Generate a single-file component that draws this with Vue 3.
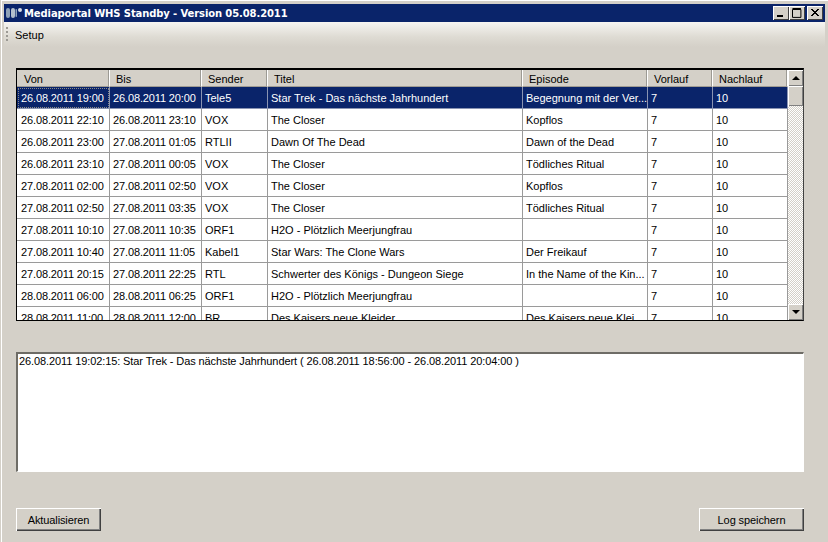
<script setup>
const columns = [
  { label: 'Von', w: 93 },
  { label: 'Bis', w: 92 },
  { label: 'Sender', w: 66 },
  { label: 'Titel', w: 255 },
  { label: 'Episode', w: 125 },
  { label: 'Vorlauf', w: 65 },
  { label: 'Nachlauf', w: 75 }
]
const rows = [
  ['26.08.2011 19:00', '26.08.2011 20:00', 'Tele5', 'Star Trek - Das nächste Jahrhundert', 'Begegnung mit der Ver...', '7', '10'],
  ['26.08.2011 22:10', '26.08.2011 23:10', 'VOX', 'The Closer', 'Kopflos', '7', '10'],
  ['26.08.2011 23:00', '27.08.2011 01:05', 'RTLII', 'Dawn Of The Dead', 'Dawn of the Dead', '7', '10'],
  ['26.08.2011 23:10', '27.08.2011 00:05', 'VOX', 'The Closer', 'Tödliches Ritual', '7', '10'],
  ['27.08.2011 02:00', '27.08.2011 02:50', 'VOX', 'The Closer', 'Kopflos', '7', '10'],
  ['27.08.2011 02:50', '27.08.2011 03:35', 'VOX', 'The Closer', 'Tödliches Ritual', '7', '10'],
  ['27.08.2011 10:10', '27.08.2011 10:35', 'ORF1', 'H2O - Plötzlich Meerjungfrau', '', '7', '10'],
  ['27.08.2011 10:40', '27.08.2011 11:05', 'Kabel1', 'Star Wars: The Clone Wars', 'Der Freikauf', '7', '10'],
  ['27.08.2011 20:15', '27.08.2011 22:25', 'RTL', 'Schwerter des Königs - Dungeon Siege', 'In the Name of the Kin...', '7', '10'],
  ['28.08.2011 06:00', '28.08.2011 06:25', 'ORF1', 'H2O - Plötzlich Meerjungfrau', '', '7', '10'],
  ['28.08.2011 11:00', '28.08.2011 12:00', 'BR', 'Des Kaisers neue Kleider', 'Des Kaisers neue Klei...', '7', '10']
]
</script>

<template>
  <div class="window">
    <header class="titlebar">
      <svg class="appicon" width="18" height="12" viewBox="0 0 18 12">
        <rect x="0" y="1" width="4" height="10" rx="2" fill="#8fa2b8" />
        <rect x="5" y="1" width="4" height="10" rx="2" fill="#b4c0cc" />
        <rect x="9.5" y="2" width="1.5" height="8" rx="0.7" fill="#8fa2b8" />
        <circle cx="14" cy="3" r="2" fill="#d8dee6" />
      </svg>
      <span class="title">Mediaportal WHS Standby - Version 05.08.2011</span>
      <div class="controls">
        <button class="ctl">
          <svg width="10" height="10" viewBox="0 0 10 10"><rect x="1" y="7" width="6" height="2" fill="#000" /></svg>
        </button>
        <button class="ctl">
          <svg width="10" height="10" viewBox="0 0 10 10"><path d="M0.5 1.5h8.4v7.9h-8.4zM0.5 0.5h8.4" fill="none" stroke="#000" /></svg>
        </button>
        <button class="ctl close">
          <svg width="10" height="10" viewBox="0 0 10 10"><path d="M1 1l7 7M2 1l7 7M8 1l-7 7M9 1l-7 7" stroke="#000" /></svg>
        </button>
      </div>
    </header>

    <nav class="menubar">
      <span class="grip"></span>
      <span class="menuitem">Setup</span>
    </nav>

    <main class="content">
      <section class="grid">
        <div class="gridbody">
          <div class="headrow">
            <div v-for="c in columns" :key="c.label" class="headcell" :style="{ width: c.w + 'px' }">{{ c.label }}</div>
          </div>
          <div class="rows">
            <div v-for="(r, i) in rows" :key="i" class="row" :class="{ selected: i === 0 }">
              <div
                v-for="(v, j) in r"
                :key="j"
                class="cell"
                :class="{ focus: i === 0 && j === 0, date: j < 2 }"
                :style="{ width: columns[j].w + 'px' }"
              >{{ v }}</div>
            </div>
          </div>
        </div>
        <div class="scrollbar">
          <button class="sbtn"><span class="arrow up"></span></button>
          <div class="thumb"></div>
          <div class="track"></div>
          <button class="sbtn"><span class="arrow down"></span></button>
        </div>
      </section>

      <div class="logbox">26.08.2011 19:02:15: Star Trek - Das nächste Jahrhundert ( 26.08.2011 18:56:00 - 26.08.2011 20:04:00 )</div>

      <footer class="actions">
        <button class="btn refresh">Aktualisieren</button>
        <button class="btn save">Log speichern</button>
      </footer>
    </main>
  </div>
</template>

<style>
html, body { margin: 0; background: #d4d0c8; }
</style>

<style scoped>
.window {
  width: 828px;
  height: 542px;
  box-sizing: border-box;
  overflow: hidden;
  background: #d4d0c8;
  border-left: 1px solid #d4d0c8;
  box-shadow: inset 1px 1px 0 #fff;
  padding: 4px 3px 0 3px;
  font-family: "Liberation Sans", Arial, sans-serif;
  font-size: 11px;
  color: #000;
  display: flex;
  flex-direction: column;
}
.titlebar {
  height: 18px;
  flex: none;
  background: #0a246a;
  display: flex;
  align-items: center;
  padding-left: 2px;
  color: #fff;
}
.appicon { flex: none; }
.title {
  font-family: "DejaVu Sans", Verdana, sans-serif;
  font-weight: bold;
  font-size: 10px;
  letter-spacing: -0.11px;
  white-space: nowrap;
}
.controls { margin-left: auto; display: flex; margin-right: 2px; }
.ctl {
  width: 16px;
  height: 14px;
  padding: 0;
  border: none;
  background: #d4d0c8;
  box-shadow: inset 1px 1px 0 #fff, inset -1px -1px 0 #404040;
  display: flex;
  align-items: center;
  justify-content: center;
}
.close { margin-left: 2px; }
.menubar {
  height: 25px;
  flex: none;
  display: flex;
  align-items: center;
  background: linear-gradient(#f6f5f2, #dedbd3 60%, #d4d0c8);
  padding-left: 2px;
}
.grip {
  width: 2px;
  height: 16px;
  background: repeating-linear-gradient(#9c9a94 0 2px, transparent 2px 4px);
}
.menuitem { margin-left: 7px; }
.content {
  flex: 1;
  display: flex;
  flex-direction: column;
  padding: 21px 21px 0 12px;
  min-height: 0;
}
.grid {
  height: 253px;
  flex: none;
  box-sizing: border-box;
  display: flex;
  border: 1px solid #000;
  border-top-width: 2px;
  border-right-color: #404040;
  background: #fff;
  overflow: hidden;
}
.gridbody { width: 771px; flex: none; overflow: hidden; }
.headrow { display: flex; height: 17px; background: #d4d0c8; }
.headcell {
  flex: none;
  box-sizing: border-box;
  padding: 2px 0 0 6px;
  line-height: 14px;
  border-right: 1px solid #fff;
  box-shadow: inset -1px 0 0 #9c9a94;
  border-bottom: 1px solid #a09c94;
  white-space: nowrap;
}
.headcell:first-child { padding-left: 7px; }
.row { display: flex; height: 22px; }
.cell {
  flex: none;
  box-sizing: border-box;
  height: 22px;
  line-height: 22px;
  padding-left: 3px;
  border-right: 1px solid #9a9a9a;
  border-bottom: 1px solid #9a9a9a;
  white-space: nowrap;
  overflow: hidden;
}
.date { letter-spacing: -0.13px; }
.row .cell:first-child { padding-left: 4px; }
.selected { background: #0a246a; color: #fff; }
.selected .cell { border-color: #8a94b2; }
.focus { outline: 1px dotted #8a8a8a; outline-offset: -2px; }
.scrollbar {
  flex: 1;
  display: flex;
  flex-direction: column;
  background: repeating-conic-gradient(#d4d0c8 0 25%, #fff 0 50%) 0 0 / 2px 2px;
}
.sbtn {
  height: 16px;
  flex: none;
  padding: 0;
  border: none;
  background: #d4d0c8;
  box-shadow: inset 1px 1px 0 #fff, inset -1px -1px 0 #808080;
  display: flex;
  align-items: center;
  justify-content: center;
}
.arrow { width: 0; height: 0; border-left: 4px solid transparent; border-right: 4px solid transparent; }
.arrow.up { border-bottom: 4px solid #000; }
.arrow.down { border-top: 4px solid #000; }
.thumb {
  height: 20px;
  flex: none;
  background: #d4d0c8;
  box-shadow: inset 1px 1px 0 #fff, inset -1px -1px 0 #808080;
}
.track { flex: 1; }
.logbox {
  margin-top: 31px;
  height: 120px;
  flex: none;
  box-sizing: border-box;
  background: #fff;
  border: 1px solid #fff;
  border-top: 2px solid #6e6c66;
  border-left: 2px solid #6e6c66;
  padding: 0 0 0 1px;
  line-height: 14px;
  letter-spacing: -0.1px;
  white-space: nowrap;
}
.actions {
  margin-top: 36px;
  display: flex;
  justify-content: space-between;
}
.btn {
  height: 23px;
  padding: 0;
  border: none;
  background: #d4d0c8;
  box-shadow: inset 1px 1px 0 #fff, inset -1px -1px 0 #404040, inset -2px -2px 0 #808080;
  font-family: inherit;
  font-size: 11px;
  letter-spacing: -0.1px;
  color: #000;
}
.refresh { width: 85px; }
.save { width: 105px; }
</style>
